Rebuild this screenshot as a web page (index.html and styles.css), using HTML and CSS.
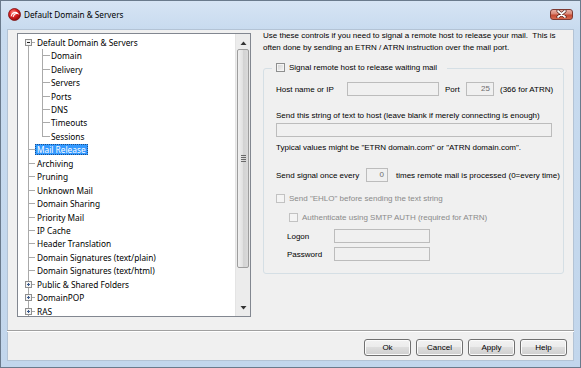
FILE: index.html
```html
<!DOCTYPE html>
<html>
<head>
<meta charset="utf-8">
<link rel="stylesheet" href="styles.css">
</head>
<body>
<div class="window">
  <div class="titlebar">
    <svg class="appicon" viewBox="0 0 13 13">
      <defs>
        <radialGradient id="rg" cx="40%" cy="35%" r="70%">
          <stop offset="0" stop-color="#ff9a90"/>
          <stop offset="0.45" stop-color="#e02424"/>
          <stop offset="1" stop-color="#8a0606"/>
        </radialGradient>
      </defs>
      <circle cx="6.5" cy="6.5" r="6" fill="url(#rg)" stroke="#7a1010" stroke-width="0.8"/>
      <path d="M3.2 8 C3.8 4.4, 8 3.4, 9.8 5.6 C8.2 5, 6.2 5.6, 5.2 8.6" fill="none" stroke="#fff" stroke-width="1.1" stroke-linecap="round"/>
    </svg>
    <span class="title">Default Domain &amp; Servers</span>
    <div class="close">
      <svg width="11" height="8" viewBox="0 0 11 8">
        <path d="M2 1 L9 7 M9 1 L2 7" stroke="#4a1a14" stroke-width="3" stroke-linecap="round"/>
        <path d="M2 1 L9 7 M9 1 L2 7" stroke="#fff" stroke-width="1.7" stroke-linecap="round"/>
      </svg>
    </div>
  </div>
  <div class="client">
    <div class="main">
      <div class="tree">
        <div class="tree-items">
          <div class="row root">
            <svg class="exp" viewBox="0 0 7 7"><rect x="0.5" y="0.5" width="6" height="6" fill="#f4f4f4" stroke="#8f8f8f"/><path d="M2 3.5 H5" stroke="#222"/></svg>
            <span class="lbl lbl-exp">Default Domain &amp; Servers</span>
          </div>
          <div class="row l1"><span class="lbl">Domain</span></div>
          <div class="row l1"><span class="lbl">Delivery</span></div>
          <div class="row l1"><span class="lbl">Servers</span></div>
          <div class="row l1"><span class="lbl">Ports</span></div>
          <div class="row l1"><span class="lbl">DNS</span></div>
          <div class="row l1"><span class="lbl">Timeouts</span></div>
          <div class="row l1 last"><span class="lbl">Sessions</span></div>
          <div class="row l0"><span class="lbl sel">Mail Release</span></div>
          <div class="row l0"><span class="lbl">Archiving</span></div>
          <div class="row l0"><span class="lbl">Pruning</span></div>
          <div class="row l0"><span class="lbl">Unknown Mail</span></div>
          <div class="row l0"><span class="lbl">Domain Sharing</span></div>
          <div class="row l0"><span class="lbl">Priority Mail</span></div>
          <div class="row l0"><span class="lbl">IP Cache</span></div>
          <div class="row l0"><span class="lbl">Header Translation</span></div>
          <div class="row l0"><span class="lbl">Domain Signatures (text/plain)</span></div>
          <div class="row l0"><span class="lbl">Domain Signatures (text/html)</span></div>
          <div class="row plus">
            <svg class="exp" viewBox="0 0 7 7"><rect x="0.5" y="0.5" width="6" height="6" fill="#f4f4f4" stroke="#8f8f8f"/><path d="M2 3.5 H5 M3.5 2 V5" stroke="#3b5a8c"/></svg>
            <span class="lbl lbl-exp">Public &amp; Shared Folders</span>
          </div>
          <div class="row plus">
            <svg class="exp" viewBox="0 0 7 7"><rect x="0.5" y="0.5" width="6" height="6" fill="#f4f4f4" stroke="#8f8f8f"/><path d="M2 3.5 H5 M3.5 2 V5" stroke="#3b5a8c"/></svg>
            <span class="lbl lbl-exp">DomainPOP</span>
          </div>
          <div class="row plus">
            <svg class="exp" viewBox="0 0 7 7"><rect x="0.5" y="0.5" width="6" height="6" fill="#f4f4f4" stroke="#8f8f8f"/><path d="M2 3.5 H5 M3.5 2 V5" stroke="#3b5a8c"/></svg>
            <span class="lbl lbl-exp">RAS</span>
          </div>
        </div>
        <div class="vscroll">
          <div class="sb-btn sb-up"><svg width="7" height="4" viewBox="0 0 7 4"><path d="M0.5 4 L3.5 0.5 L6.5 4 Z" fill="#333"/></svg></div>
          <div class="sb-track">
            <div class="thumb">
              <svg width="5" height="7" viewBox="0 0 5 7"><path d="M0 0.5 H5 M0 2.5 H5 M0 4.5 H5 M0 6.5 H5" stroke="#6a6a6a" stroke-width="1"/></svg>
            </div>
          </div>
          <div class="sb-btn sb-down"><svg width="7" height="4" viewBox="0 0 7 4"><path d="M0.5 0 L3.5 3.5 L6.5 0 Z" fill="#333"/></svg></div>
        </div>
      </div>
      <div class="pane">
        <p class="desc">Use these controls if you need to signal a remote host to release your mail.&nbsp; This is<br>often done by sending an ETRN / ATRN instruction over the mail port.</p>
        <div class="group">
          <div class="legend"><span class="chk"></span><span>Signal remote host to release waiting mail</span></div>
          <div class="frow host-row">
            <span class="host-lbl">Host name or IP</span>
            <span class="edit host-edit"></span>
            <span class="port-lbl">Port</span>
            <span class="edit port-edit">25</span>
            <span class="port-note">(366 for ATRN)</span>
          </div>
          <div class="line send-lbl">Send this string of text to host (leave blank if merely connecting is enough)</div>
          <span class="edit wide-edit"></span>
          <div class="line typical">Typical values might be &quot;ETRN domain.com&quot; or &quot;ATRN domain.com&quot;.</div>
          <div class="frow signal-row">
            <span class="signal-lbl">Send signal once every</span>
            <span class="edit count-edit">0</span>
            <span class="signal-note">times remote mail is processed (0=every time)</span>
          </div>
          <div class="cbrow dis ehlo"><span class="chk chk-dis"></span><span>Send &quot;EHLO&quot; before sending the text string</span></div>
          <div class="cbrow dis auth"><span class="chk chk-dis"></span><span>Authenticate using SMTP AUTH (required for ATRN)</span></div>
          <div class="frow cred logon"><span class="cred-lbl">Logon</span><span class="edit cred-edit"></span></div>
          <div class="frow cred password"><span class="cred-lbl">Password</span><span class="edit cred-edit"></span></div>
        </div>
      </div>
    </div>
    <div class="sep"></div>
    <div class="buttons">
      <div class="btn">Ok</div>
      <div class="btn">Cancel</div>
      <div class="btn">Apply</div>
      <div class="btn">Help</div>
    </div>
  </div>
</div>
</body>
</html>
```

FILE: styles.css
```css
* { box-sizing: border-box; }
html, body { margin: 0; padding: 0; }
body {
  width: 581px;
  height: 368px;
  overflow: hidden;
  font-family: "Liberation Sans", Arial, sans-serif;
  font-size: 8px;
  color: #000;
  background: #c1d5eb;
}
.window {
  width: 581px;
  height: 368px;
  display: flex;
  flex-direction: column;
  border: 1px solid #6a7a8c;
  padding: 0 6px 6px;
  background: linear-gradient(#d6e4f4, #c8dbef 28px, #c2d6ec);
}
.titlebar {
  height: 28px;
  display: flex;
  align-items: center;
  padding-bottom: 2px;
  flex: none;
}
.appicon { width: 13px; height: 13px; margin-left: 1px; flex: none; }
.title {
  font-family: "Noto Sans", sans-serif;
  font-size: 8.2px;
  margin-left: 3px;
  flex: 1;
  white-space: nowrap;
}
.close {
  width: 23px;
  height: 11px;
  margin-right: 1px;
  border: 1px solid #7d3a33;
  border-radius: 3px;
  background: linear-gradient(#eab0a4, #d98675 45%, #c44a33 55%, #d7694f);
  display: flex;
  align-items: center;
  justify-content: center;
}
.client {
  flex: 1;
  background: #f0f0f0;
  display: flex;
  flex-direction: column;
  box-shadow: inset 0 0 0 1px #b3c3d5;
}
.main {
  height: 301px;
  display: flex;
  align-items: flex-start;
  padding-left: 10px;
  flex: none;
}
.tree {
  margin-top: 4px;
  width: 234px;
  height: 284px;
  border: 1px solid #828790;
  background: #fff;
  display: flex;
  flex: none;
}
.tree-items {
  flex: 1;
  padding-top: 1.6px;
  overflow: hidden;
  font-family: "Noto Sans", sans-serif;
  font-size: 8.3px;
}
.row {
  height: 13.45px;
  display: flex;
  align-items: center;
  white-space: nowrap;
  background-repeat: no-repeat;
}
.lbl { padding: 0 2px; line-height: 11px; height: 11px; }
.l0 {
  padding-left: 17px;
  background-image: linear-gradient(#aaa, #aaa), linear-gradient(#aaa, #aaa);
  background-position: 10px 0, 10px 50%;
  background-size: 1px 100%, 7px 1px;
}
.l1 {
  padding-left: 31px;
  background-image: linear-gradient(#aaa, #aaa), linear-gradient(#aaa, #aaa), linear-gradient(#aaa, #aaa);
  background-position: 10px 0, 24px 0, 24px 50%;
  background-size: 1px 100%, 1px 100%, 8px 1px;
}
.l1.last { background-size: 1px 100%, 1px 7px, 8px 1px; }
.root, .plus {
  background-image: linear-gradient(#aaa, #aaa), linear-gradient(#aaa, #aaa);
  background-position: 10px 100%, 14px 50%;
  background-size: 1px 50%, 3px 1px;
}
.plus { background-position: 10px 0, 14px 50%; background-size: 1px 100%, 3px 1px; }
.exp { width: 7px; height: 7px; margin-left: 7px; flex: none; }
.lbl-exp { margin-left: 3px; }
.sel {
  background: #3399ff;
  color: #fff;
  outline: 1px dotted #1c4f8c;
  outline-offset: -1px;
}
.vscroll {
  width: 15px;
  flex: none;
  display: flex;
  flex-direction: column;
  background: #ececec;
  border-left: 1px solid #e4e4e4;
}
.sb-btn { display: flex; justify-content: center; align-items: center; flex: none; }
.sb-up { height: 15px; padding-top: 3px; }
.sb-down { height: 16px; }
.sb-track { flex: 1; padding: 0 1px; }
.thumb {
  height: 219px;
  border: 1px solid #9d9d9d;
  border-radius: 2px;
  background: linear-gradient(to right, #f0f0f0, #e0e0e0 50%, #d2d2d2 50%, #dadada);
  display: flex;
  align-items: center;
  justify-content: center;
}
.pane {
  flex: 1;
  margin-left: 12px;
  padding-right: 10px;
}
.desc {
  margin: 1.25px 0 0;
  line-height: 11.5px;
  white-space: nowrap;
}
.group {
  margin-top: 14.75px;
  border: 1px solid #d5dfe5;
  border-radius: 3px;
  padding: 0 0 12px 12px;
}
.legend {
  display: flex;
  align-items: center;
  height: 12px;
  margin-top: -8px;
  margin-left: -4px;
  padding: 0 10px 0 4px;
  width: fit-content;
  background: #f0f0f0;
  white-space: nowrap;
}
.chk {
  width: 9px;
  height: 9px;
  flex: none;
  margin-right: 4px;
  border: 1px solid #8e8f8f;
  background: linear-gradient(135deg, #d2d2d2, #f6f6f6);
  box-shadow: inset 0 0 0 1px #f4f4f4;
}
.chk-dis { border-color: #c2c2c2; background: #f4f4f4; box-shadow: none; }
.frow { display: flex; align-items: center; height: 14px; white-space: nowrap; }
.line { line-height: 12px; height: 12px; white-space: nowrap; }
.edit {
  display: block;
  height: 14px;
  border: 1px solid #bcbcbc;
  background: #f0f0f0;
  flex: none;
  color: #6d6d6d;
  text-align: right;
  line-height: 12px;
  padding-right: 3px;
}
.host-row { margin-top: 9px; }
.host-lbl { width: 71px; flex: none; }
.host-edit { width: 92px; }
.port-lbl { width: 21px; margin-left: 6px; flex: none; }
.port-edit { width: 28px; }
.port-note { margin-left: 6px; }
.send-lbl { margin-top: 14px; }
.wide-edit { margin-top: 1px; width: 276px; }
.typical { margin-top: 5px; }
.signal-row { margin-top: 14px; }
.signal-lbl { width: 90px; flex: none; }
.count-edit { width: 22px; }
.signal-note { margin-left: 8px; }
.cbrow { display: flex; align-items: center; height: 12px; white-space: nowrap; }
.dis { color: #8a8a8a; }
.ehlo { margin-top: 10px; }
.auth { margin-top: 7px; margin-left: 13px; }
.cred { margin-left: 11px; }
.logon { margin-top: 6px; }
.password { margin-top: 4px; }
.cred-lbl { width: 47px; flex: none; }
.cred-edit { width: 96px; }
.sep {
  height: 2px;
  flex: none;
  border-top: 1px solid #a0a0a0;
  border-bottom: 1px solid #fff;
}
.buttons {
  margin-top: 7px;
  display: flex;
  justify-content: flex-end;
  gap: 5px;
  padding-right: 7px;
}
.btn {
  width: 47px;
  height: 17px;
  border: 1px solid #707070;
  border-radius: 3px;
  background: linear-gradient(#f2f2f2, #ebebeb 50%, #dddddd 50%, #cfcfcf);
  box-shadow: inset 0 0 0 1px #fbfbfb;
  display: flex;
  align-items: center;
  justify-content: center;
  white-space: nowrap;
}
```
